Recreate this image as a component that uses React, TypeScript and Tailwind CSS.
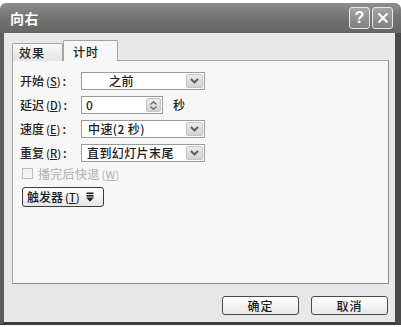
import React from "react";

const font = { fontFamily: '"Noto Sans CJK SC", "Noto Sans", sans-serif' };

function Chevron() {
  return (
    <svg width="9" height="6" viewBox="0 0 9 6">
      <path d="M1 1 L4.5 4.5 L8 1" fill="none" stroke="#555" strokeWidth="1.8" />
    </svg>
  );
}

function Label({ text, k }: { text: string; k: string }) {
  return (
    <div className="w-[61px] shrink-0 text-[12px] font-medium leading-none text-[#222] flex items-center">
      <span>{text}</span>
      <span className="text-[11px] ml-[2px]">
        (<span className="underline">{k}</span>)
      </span>
      <span className="ml-[2px]">:</span>
    </div>
  );
}

function Select({ text, pl = "pl-[6px]" }: { text: string; pl?: string }) {
  return (
    <div className="w-[124px] h-[18px] border border-[#9a9a9a] bg-white flex items-center">
      <span className={`flex-1 text-[12px] font-medium leading-none text-[#1a1a1a] tracking-[0.4px] ${pl}`}>{text}</span>
      <div className="w-[17px] h-[14px] mr-[1px] rounded-[2px] bg-gradient-to-b from-[#ececec] to-[#d2d2d2] border border-[#c4c4c4] flex items-center justify-center">
        <Chevron />
      </div>
    </div>
  );
}

export default function App() {
  return (
    <div className="w-[401px] h-[327px] bg-white overflow-hidden" style={font}>
      <div className="mt-[3px] w-[401px] flex flex-col">
        {/* Title bar */}
        <div className="h-[30px] rounded-t-[6px] bg-gradient-to-b from-[#8e8e8e] via-[#727272] to-[#666666] flex items-center pl-[10px] pr-[8px]">
          <span className="text-white text-[14px] font-bold leading-none tracking-[0.5px]">向右</span>
          <div className="ml-auto flex gap-[2px] items-center">
            <div className="w-[21px] h-[22px] rounded-[3px] border border-[#e8e8e8] bg-gradient-to-b from-[#a4a4a4] to-[#808080] flex items-center justify-center">
              <span className="text-white text-[16px] font-bold leading-none" style={{ fontFamily: '"Liberation Sans", sans-serif' }}>?</span>
            </div>
            <div className="w-[21px] h-[22px] rounded-[3px] border border-[#e8e8e8] bg-gradient-to-b from-[#a4a4a4] to-[#808080] flex items-center justify-center">
              <svg width="12" height="12" viewBox="0 0 12 12">
                <path d="M1.5 1.5 L10.5 10.5 M10.5 1.5 L1.5 10.5" stroke="white" strokeWidth="2" />
              </svg>
            </div>
          </div>
        </div>
        {/* Body */}
        <div className="h-[292px] border-l-[4px] border-r-[6px] border-b-[3px] border-l-[#5c5c5c] border-r-[#4a4a4a] border-b-[#3e3e3e] bg-[#e8e8e8] flex flex-col pt-[7px]">
          {/* Tabs */}
          <div className="h-[21px] mb-[-1px] pl-[8px] flex items-end relative z-10">
            <div className="w-[51px] h-[18px] border border-b-0 border-[#a4a4a4] rounded-t-[2px] bg-gradient-to-b from-[#f8f8f8] to-[#e4e4e4] pl-[6px] flex items-center text-[12px] font-medium leading-none text-[#222] tracking-[1px]">
              效果
            </div>
            <div className="w-[55px] h-[21px] border border-b-0 border-[#a4a4a4] rounded-t-[2px] bg-[#f7f7f7] pl-[9px] pt-[1px] flex items-center text-[12px] font-medium leading-none text-[#222] tracking-[1px]">
              计时
            </div>
          </div>
          {/* Panel */}
          <div className="ml-[8px] mr-[6px] h-[224px] border border-[#a4a4a4] border-r-[#8c8c8c] border-b-[#8c8c8c] bg-[#f7f7f7] pl-[7px] pt-[11px] flex flex-col">
            <div className="flex items-center h-[18px]">
              <Label text="开始" k="S" />
              <Select text="之前" pl="pl-[27px]" />
            </div>
            <div className="flex items-center h-[18px] mt-[6px]">
              <Label text="延迟" k="D" />
              <div className="w-[82px] h-[18px] border border-[#9a9a9a] bg-white flex items-center">
                <span className="flex-1 pl-[4px] text-[12px] font-medium leading-none text-[#1a1a1a]">0</span>
                <div className="w-[15px] h-[14px] mr-[1px] rounded-[2px] bg-gradient-to-b from-[#ececec] to-[#d2d2d2] border border-[#c4c4c4] flex flex-col items-center justify-center gap-[1px]">
                  <svg width="7" height="4" viewBox="0 0 7 4"><path d="M0.5 3.5 L3.5 0.8 L6.5 3.5" fill="none" stroke="#666" strokeWidth="1.3" /></svg>
                  <svg width="7" height="4" viewBox="0 0 7 4"><path d="M0.5 0.5 L3.5 3.2 L6.5 0.5" fill="none" stroke="#666" strokeWidth="1.3" /></svg>
                </div>
              </div>
              <span className="ml-[10px] text-[12px] font-medium leading-none text-[#222]">秒</span>
            </div>
            <div className="flex items-center h-[18px] mt-[6px]">
              <Label text="速度" k="E" />
              <Select text="中速(2 秒)" />
            </div>
            <div className="flex items-center h-[18px] mt-[6px]">
              <Label text="重复" k="R" />
              <Select text="直到幻灯片末尾" pl="pl-[5px]" />
            </div>
            <div className="flex items-center h-[11px] mt-[6px] ml-[2px]">
              <div className="w-[11px] h-[11px] border border-[#c0c0c0] bg-[#f4f4f4]" />
              <span className="ml-[5px] text-[12px] leading-none text-[#b0b0b0] tracking-[0.3px]">
                播完后快退<span className="text-[11px] ml-[2px]">(<span className="underline">W</span>)</span>
              </span>
            </div>
            <div className="mt-[8px] ml-[2px] w-[82px] h-[20px] rounded-[3px] border border-[#3c3c3c] bg-gradient-to-b from-[#ffffff] to-[#e6e6e6] flex items-center pl-[4px] text-[12px] font-medium leading-none text-[#1a1a1a]">
              <span>触发器</span>
              <span className="text-[11px] ml-[2px]">(<span className="underline">T</span>)</span>
              <svg className="ml-[6px]" width="8" height="10" viewBox="0 0 8 10">
                <rect x="0.5" y="0.5" width="7" height="1.6" fill="#222" />
                <rect x="0.5" y="3" width="7" height="1.6" fill="#222" />
                <path d="M0 5.5 L8 5.5 L4 9.8 Z" fill="#222" />
              </svg>
            </div>
          </div>
          {/* Buttons */}
          <div className="mt-[12px] h-[19px] flex justify-end gap-[12px] pr-[7px]">
            <div className="w-[77px] h-[19px] rounded-[3px] border border-[#4a4a4a] bg-gradient-to-b from-white to-[#e8e8e8] flex items-center justify-center text-[12px] font-medium leading-none text-[#1a1a1a] tracking-[1px]">
              确定
            </div>
            <div className="w-[77px] h-[19px] rounded-[3px] border border-[#4a4a4a] bg-gradient-to-b from-white to-[#e8e8e8] flex items-center justify-center text-[12px] font-medium leading-none text-[#1a1a1a] tracking-[1px]">
              取消
            </div>
          </div>
        </div>
      </div>
    </div>
  );
}
